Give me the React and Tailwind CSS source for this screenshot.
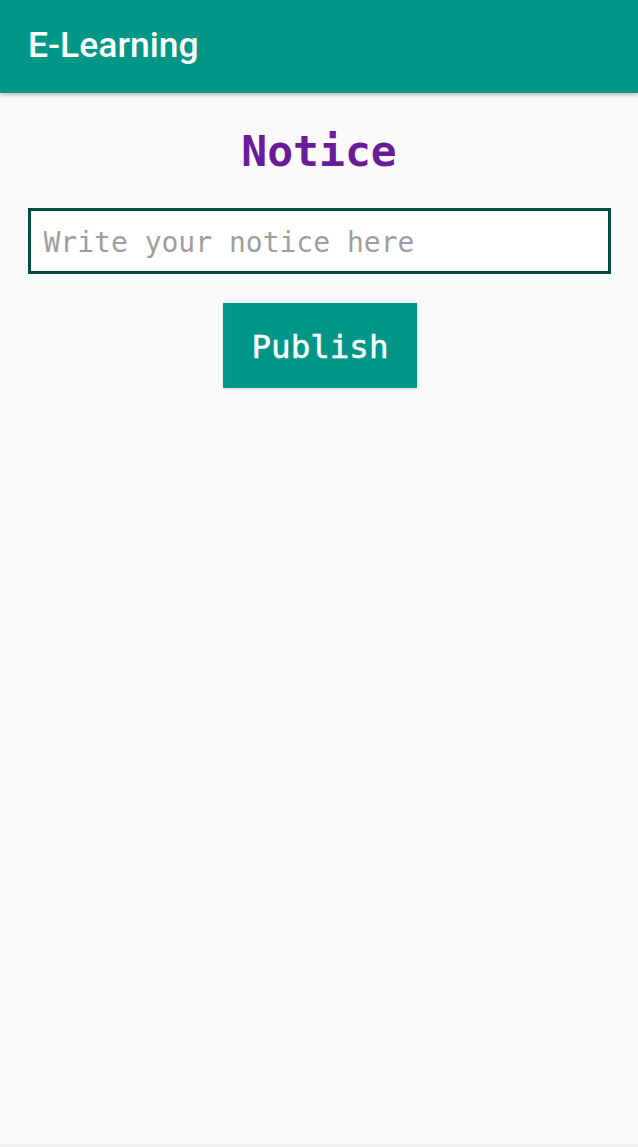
import React from "react";

export default function App() {
  return (
    <div className="flex h-[1147px] w-full flex-col bg-[#fafafa]">
      <header className="relative z-10 flex h-[93px] shrink-0 items-center bg-[#009688] pl-[28px] pb-[2px] shadow-[0_2px_4px_rgba(0,0,0,0.25)]">
        <h1 className="font-['Roboto',sans-serif] text-[35.5px] font-medium text-white">
          E-Learning
        </h1>
      </header>
      <main className="flex flex-1 flex-col items-center font-['DejaVu_Sans_Mono',monospace]">
        <h2 className="mt-[33px] text-[43px] font-bold leading-[51px] text-[#6a1b9a]">
          Notice
        </h2>
        <input
          type="text"
          placeholder="Write your notice here"
          className="mt-[31px] box-border h-[66px] w-[583px] border-[3px] border-[#004d40] bg-white pl-[13px] pt-[2px] text-[28px] text-[#212121] outline-none placeholder:text-[#9e9e9e]"
        />
        <button className="ml-[2px] mt-[29px] flex h-[85px] w-[194px] items-center justify-center bg-[#009688] pt-[3px] text-[32.5px] text-white [-webkit-text-stroke:0.5px_white] shadow-[0_1px_2px_rgba(0,0,0,0.15)]">
          Publish
        </button>
      </main>
      <div className="h-[3px] w-full shrink-0 bg-[#f0f0f0]" />
    </div>
  );
}
